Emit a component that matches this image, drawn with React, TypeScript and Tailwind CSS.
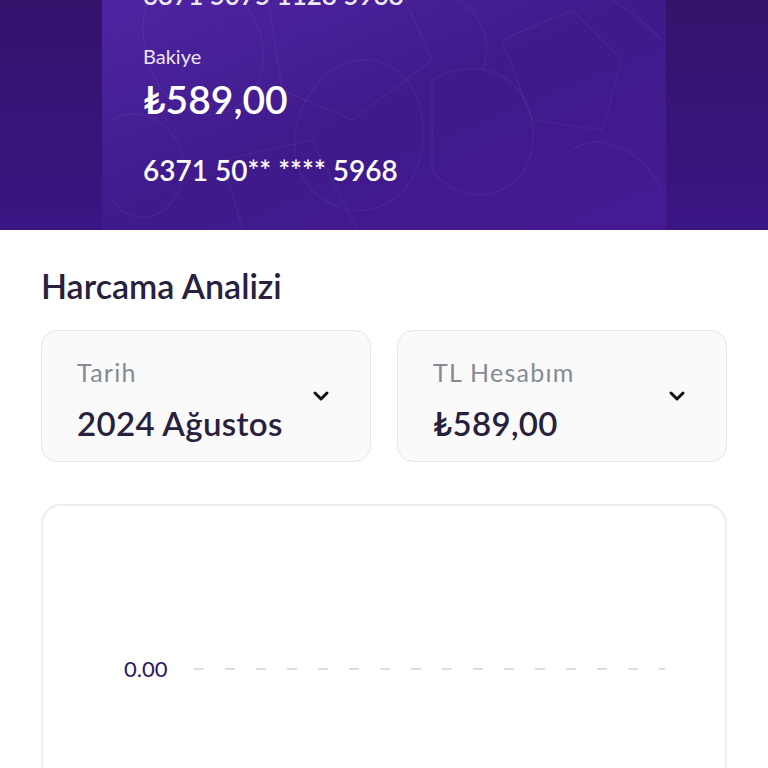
import { ChevronDown } from 'lucide-react';

const font = { fontFamily: '"Lato", "Noto Sans", sans-serif' };

function CardPattern() {
  return (
    <svg
      className="absolute inset-0 h-full w-full"
      viewBox="0 0 564 230"
      fill="none"
      stroke="rgba(255,255,255,0.045)"
      strokeWidth="1.5"
    >
      <path d="M60 -20 C120 -30 170 10 160 70 C150 120 90 130 60 90 C40 60 30 10 60 -20 Z" />
      <path d="M165 -10 L290 -30 L330 60 L250 120 L180 90 Z" />
      <path d="M230 70 C280 40 330 80 320 150 C310 210 250 230 210 190 C180 160 190 100 230 70 Z" />
      <path d="M300 -10 C350 -20 400 20 380 70" />
      <path d="M330 80 C380 50 440 80 430 150 C420 200 360 210 330 170 Z" />
      <path d="M400 40 L470 10 L520 60 L500 130 L430 120 Z" />
      <path d="M120 160 L210 140 L260 240 L150 260 Z" />
      <path d="M430 -20 C470 -30 520 0 560 40" />
      <path d="M10 120 C40 100 90 130 80 180 C70 220 30 230 10 200" />
      <path d="M470 150 C500 130 540 150 560 190" />
    </svg>
  );
}

function Select({ label, value }: { label: string; value: string }) {
  return (
    <div className="flex h-[132px] items-center justify-between rounded-2xl border border-[#e6e6e8] bg-[#fafafa] pl-[35px] pr-[37px]">
      <div className="flex flex-col pt-[8px]">
        <span className="text-[25px] leading-[30px] tracking-wider text-[#858b94]">{label}</span>
        <span className="mt-[16px] text-[33px] font-semibold leading-[40px] tracking-[0.01em] text-[#27213d]">
          {value}
        </span>
      </div>
      <ChevronDown className="h-6 w-6 text-[#111]" strokeWidth={3} />
    </div>
  );
}

export default function App() {
  return (
    <div className="min-h-[768px] w-[768px] overflow-hidden bg-white" style={font}>
      {/* Header */}
      <div className="flex h-[230px]">
        <div className="w-[102px] bg-gradient-to-b from-[#33136c] to-[#3b1584]" />
        <div className="relative flex-1 overflow-hidden bg-gradient-to-br from-[#4f24a3] via-[#3f1a8a] to-[#461a94] pl-[41px]">
          <CardPattern />
          <div className="relative flex flex-col text-white">
            <span className="mt-[-21px] text-[26px] font-semibold leading-[32px] opacity-90">
              6371 5075 1128 5968
            </span>
            <span className="mt-[32px] text-[20px] leading-[26px] text-[#ece6f7]">Bakiye</span>
            <span className="mt-[8px] text-[39px] font-semibold leading-[44px]">₺589,00</span>
            <span className="mt-[31px] text-[28px] font-semibold leading-[36px]">
              6371 50** **** 5968
            </span>
          </div>
        </div>
        <div className="w-[102px] bg-gradient-to-b from-[#33146b] to-[#3c1585]" />
      </div>

      {/* Content */}
      <div className="px-[41px]">
        <h2 className="mt-[36px] text-[34px] font-semibold leading-[40px] text-[#27213d]">
          Harcama Analizi
        </h2>

        <div className="mt-[24px] grid grid-cols-2 gap-[26px]">
          <Select label="Tarih" value="2024 Ağustos" />
          <Select label="TL Hesabım" value="₺589,00" />
        </div>

        <div className="mt-[42px] h-[300px] rounded-[20px] border-2 border-[#ededef] bg-white">
          <div className="flex items-center pl-[81px] pr-[60px] pt-[150px]">
            <span className="w-[70px] text-[22px] leading-[26px] text-[#2b1766]">0.00</span>
            <svg className="h-[4px] flex-1" preserveAspectRatio="none">
              <line
                x1="0"
                y1="2"
                x2="100%"
                y2="2"
                stroke="#dedee2"
                strokeWidth="2"
                strokeDasharray="10 21"
              />
            </svg>
          </div>
        </div>
      </div>
    </div>
  );
}
